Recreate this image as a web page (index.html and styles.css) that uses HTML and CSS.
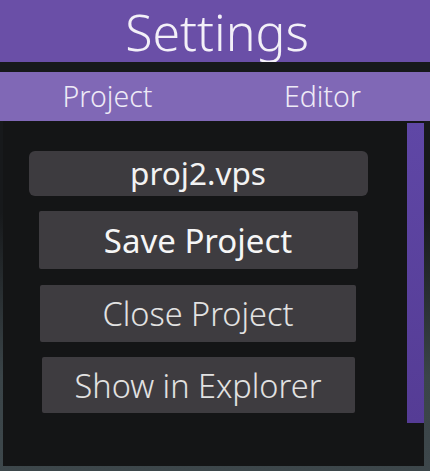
FILE: index.html
```html
<!DOCTYPE html>
<html lang="en">
<head>
<meta charset="utf-8">
<title>Settings</title>
<link rel="stylesheet" href="styles.css">
</head>
<body>
<div class="screen">
  <header class="title-bar"><span class="title-text">Settings</span></header>
  <div class="divider"></div>
  <nav class="tabs">
    <div class="tab">Project</div>
    <div class="tab">Editor</div>
  </nav>
  <main class="panel">
    <div class="content">
      <div class="file-name">proj2.vps</div>
      <button class="action action-save">Save Project</button>
      <button class="action action-close">Close Project</button>
      <button class="action action-show">Show in Explorer</button>
    </div>
    <div class="scrollbar"></div>
  </main>
</div>
</body>
</html>
```
FILE: styles.css
```css
* { box-sizing: border-box; }
html, body {
  margin: 0;
  padding: 0;
}
body {
  width: 430px;
  height: 471px;
  overflow: hidden;
  background: linear-gradient(to bottom, #17191b 0%, #17191b 45%, #3a4448 80%, #3d474b 100%);
  font-family: "Noto Sans", "Open Sans", sans-serif;
  color: #eeeeee;
}
.screen {
  display: flex;
  flex-direction: column;
  height: 471px;
}
.title-bar {
  height: 62px;
  background: #6a4fa7;
  color: #f3f0f8;
  padding-top: 7px;
  text-align: center;
}
.title-text {
  display: inline-block;
  font-size: 50px;
  font-weight: 300;
  line-height: 50px;
  margin-left: 4px;
}
.divider {
  height: 10px;
  background: #17191b;
}
.tabs {
  height: 49px;
  background: #8068b6;
  display: flex;
}
.tab {
  flex: 1;
  text-align: center;
  font-size: 28.5px;
  font-weight: 300;
  line-height: 49px;
  color: #eeeaf6;
}
.panel {
  height: 345px;
  margin-left: 3px;
  width: 421px;
  background: #141516;
  display: flex;
  align-items: flex-start;
}
.content {
  width: 390px;
  display: flex;
  flex-direction: column;
  align-items: center;
  padding-top: 30px;
}
.file-name {
  width: 339px;
  height: 45px;
  background: #3d3b3f;
  border-radius: 6px;
  text-align: center;
  font-size: 31.5px;
  font-weight: 380;
  line-height: 43px;
  color: #f2f2f2;
}
.action {
  border: none;
  background: #3e3c40;
  border-radius: 2px;
  font-family: "Noto Sans", "Open Sans", sans-serif;
  font-size: 32.5px;
  color: #e2e2e2;
  padding: 0;
  text-align: center;
}
.action-save {
  width: 319px;
  height: 58px;
  margin-top: 15px;
  font-size: 33px;
  font-weight: 400;
  color: #f6f6f6;
}
.action-close {
  width: 316px;
  height: 57px;
  margin-top: 16px;
  font-weight: 300;
}
.action-show {
  width: 313px;
  height: 56px;
  margin-top: 15px;
  font-weight: 300;
}
.scrollbar {
  width: 17px;
  height: 300px;
  margin-top: 2px;
  margin-left: 14px;
  background: linear-gradient(to bottom, #5f47a6, #553c95);
}
```
